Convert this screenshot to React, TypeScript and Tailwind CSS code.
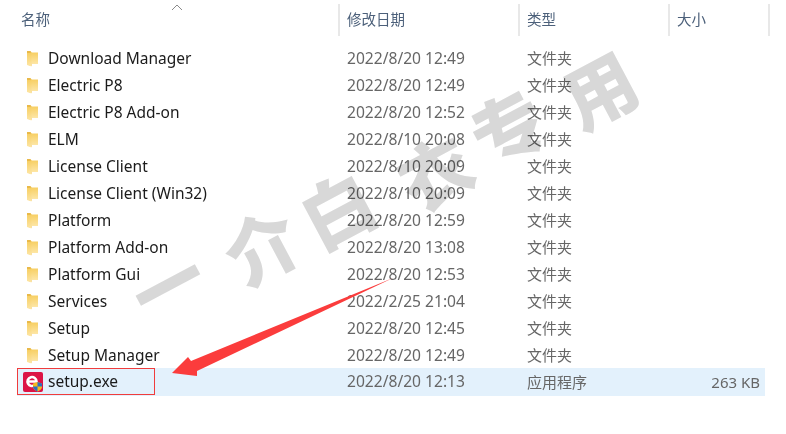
const font = { fontFamily: '"Noto Sans", "Noto Sans CJK SC", sans-serif' };

const rows = [
  ['Download Manager', '2022/8/20 12:49'],
  ['Electric P8', '2022/8/20 12:49'],
  ['Electric P8 Add-on', '2022/8/20 12:52'],
  ['ELM', '2022/8/10 20:08'],
  ['License Client', '2022/8/10 20:09'],
  ['License Client (Win32)', '2022/8/10 20:09'],
  ['Platform', '2022/8/20 12:59'],
  ['Platform Add-on', '2022/8/20 13:08'],
  ['Platform Gui', '2022/8/20 12:53'],
  ['Services', '2022/2/25 21:04'],
  ['Setup', '2022/8/20 12:45'],
  ['Setup Manager', '2022/8/20 12:49'],
];

// watermark characters and where each one sits
const marks: [string, string][] = [
  ['一', 'left-[132px] top-[249px]'],
  ['介', 'left-[226px] top-[211px]'],
  ['白', 'left-[302px] top-[174px]'],
  ['衣', 'left-[399px] top-[137px]'],
  ['专', 'left-[472px] top-[92px]'],
  ['用', 'left-[564px] top-[54px]'],
];

function FolderIcon() {
  return (
    <svg width="13" height="17" viewBox="0 0 13 17" className="shrink-0">
      <defs>
        <linearGradient id="folder" x1="0" y1="0" x2="0" y2="1">
          <stop offset="0" stopColor="#f7cf63" />
          <stop offset="1" stopColor="#fde6a6" />
        </linearGradient>
      </defs>
      <path d="M1 1h3.500l1 1.500V16l-4.500-1.500z" fill="#e9b949" />
      <path d="M4.500 2.500H12V14H5.500z" fill="url(#folder)" />
      <path d="M1 3h3.500l1 1v12.500L1 15z" fill="url(#folder)" />
    </svg>
  );
}

function SetupIcon() {
  return (
    <svg width="20" height="20" viewBox="0 0 20 20" className="shrink-0">
      <rect width="20" height="20" rx="2" fill="#dc1446" />
      <path d="M4.500 9.500h9a4.500 4.500 0 1 0-1.500 3.400" fill="none" stroke="#fff" strokeWidth="2.600" />
      <path d="M14.500 10l4.500 1.500v3.500c0 2-2.500 3.500-4.500 4.500c-2-1-4.500-2.500-4.500-4.500v-3.500z" fill="#f5b91e" />
      <path d="M14.500 10l4.500 1.500v3h-4.500zM10 14.500h4.500v5c-2-1-4.500-2.500-4.500-5z" fill="#2a6fc0" />
    </svg>
  );
}

function Header({ label, className }: { label: string; className: string }) {
  return (
    <div className={`flex h-8 items-center border-r-2 border-[#e8e8e8] pl-[7px] text-[14.5px] text-[#4c607a] ${className}`}>
      {label}
    </div>
  );
}

export default function App() {
  return (
    <div className="relative h-[434px] w-[786px] overflow-hidden bg-white" style={font}>
      {/* column headers */}
      <div className="flex pt-1 pl-[14px]">
        <Header label="名称" className="w-[326px]" />
        <Header label="修改日期" className="w-[180px]" />
        <Header label="类型" className="w-[150px]" />
        <Header label="大小" className="w-[100px]" />
      </div>
      <svg width="12" height="7" viewBox="0 0 12 7" className="absolute left-[171px] top-[4px]">
        <path d="M1 6l5-5 5 5" fill="none" stroke="#8a8a8a" />
      </svg>

      {/* file rows */}
      <div className="mt-[9px] ml-[17px] w-[748px]">
        {rows.map(([name, date]) => (
          <div key={name} className="flex h-[27px] items-center">
            <div className="flex w-[330px] items-center pl-[9px]">
              <FolderIcon />
              <span className="ml-[9px] text-[15.5px] text-[#1b1b1b]">{name}</span>
            </div>
            <span className="w-[180px] text-[15.6px] text-[#666]">{date}</span>
            <span className="text-[15px] text-[#666]">文件夹</span>
          </div>
        ))}
        <div className="-mt-px flex h-[28px] items-center bg-[#e3f1fc]">
          <div className="flex w-[330px] items-center pl-[6px]">
            <SetupIcon />
            <span className="ml-[5px] text-[15.5px] text-[#1b1b1b]">setup.exe</span>
          </div>
          <span className="w-[180px] text-[15.6px] text-[#666]">2022/8/20 12:13</span>
          <span className="text-[15px] text-[#666]">应用程序</span>
          <span className="ml-auto pr-[5px] text-[15px] text-[#666]">263 KB</span>
        </div>
      </div>

      {/* watermark */}
      {marks.map(([ch, pos]) => (
        <span
          key={ch}
          className={`pointer-events-none absolute ${pos} -rotate-[28deg] text-[72px] leading-none font-black text-[#d8d8d8] mix-blend-multiply`}
        >
          {ch}
        </span>
      ))}

      {/* annotation */}
      <div className="absolute left-[17px] top-[368px] h-[27px] w-[138px] border border-[#f03c3c]" />
      <svg width="240" height="110" viewBox="0 0 240 110" className="absolute left-[165px] top-[275px]">
        <path d="M228 3L32 96 32 101 7 98 23 82 26 86z" fill="#fb3c3c" />
      </svg>
    </div>
  );
}
